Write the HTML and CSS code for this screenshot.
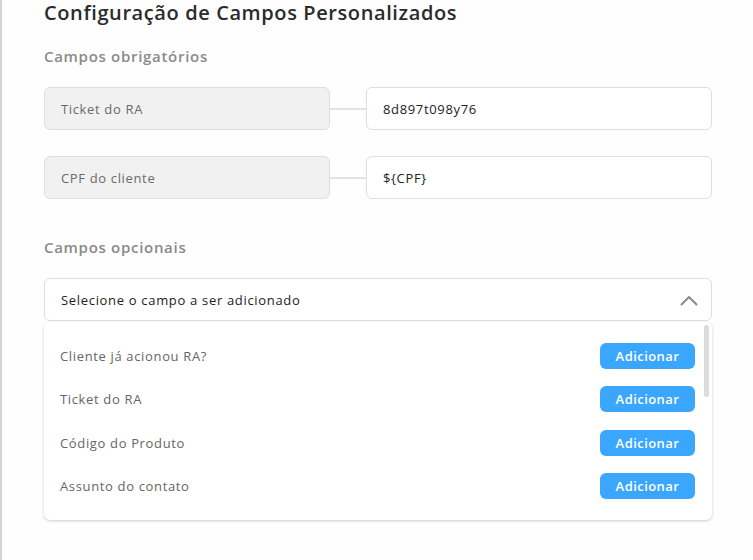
FILE: index.html
```html
<!DOCTYPE html>
<html lang="pt-BR">
<head>
<meta charset="utf-8">
<title>Configuração de Campos Personalizados</title>
<link rel="stylesheet" href="styles.css">
</head>
<body>
<div class="page">
  <main class="content">
    <h1 class="title">Configuração de Campos Personalizados</h1>

    <h2 class="section-title">Campos obrigatórios</h2>
    <div class="mapping-list">
      <div class="mapping-row">
        <div class="field field-locked">Ticket do RA</div>
        <div class="connector"></div>
        <div class="field field-value">8d897t098y76</div>
      </div>
      <div class="mapping-row">
        <div class="field field-locked">CPF do cliente</div>
        <div class="connector"></div>
        <div class="field field-value">${CPF}</div>
      </div>
    </div>

    <h2 class="section-title section-optional">Campos opcionais</h2>
    <div class="select">
      <span class="select-label">Selecione o campo a ser adicionado</span>
      <svg class="chevron" width="18" height="11" viewBox="0 0 18 11" aria-hidden="true">
        <path d="M1.5 9.5 L9 2 L16.5 9.5" fill="none" stroke="#8a8a8a" stroke-width="2" stroke-linecap="round" stroke-linejoin="round"/>
      </svg>
    </div>
    <div class="dropdown">
      <ul class="option-list">
        <li class="option"><span class="option-label">Cliente já acionou RA?</span><button class="btn-add">Adicionar</button></li>
        <li class="option"><span class="option-label">Ticket do RA</span><button class="btn-add">Adicionar</button></li>
        <li class="option"><span class="option-label">Código do Produto</span><button class="btn-add">Adicionar</button></li>
        <li class="option"><span class="option-label">Assunto do contato</span><button class="btn-add">Adicionar</button></li>
      </ul>
      <div class="scrollbar"><div class="scroll-thumb"></div></div>
    </div>
  </main>
</div>
</body>
</html>
```

FILE: styles.css
```css
* { box-sizing: border-box; }

html, body {
  margin: 0;
  padding: 0;
  background: #ffffff;
}

body {
  font-family: "Open Sans", "Noto Sans", sans-serif;
  color: #222;
}

.page {
  min-height: 560px;
  border-left: 2px solid #d4d4d4;
  background: #fefefe;
}

.content {
  width: 710px;
  padding-left: 42px;
}

.title {
  margin: 0;
  font-size: 20px;
  line-height: 26px;
  font-weight: 600;
  letter-spacing: 0.6px;
  color: #2b2b2b;
}

.section-title {
  margin: 20px 0 21px;
  font-size: 15px;
  line-height: 20px;
  font-weight: 600;
  letter-spacing: 0.7px;
  color: #8a8a8a;
}

.section-optional {
  margin-top: 38px;
}

.mapping-list {
  display: flex;
  flex-direction: column;
  gap: 26px;
}

.mapping-row {
  display: flex;
  align-items: center;
  width: 668px;
}

.field {
  height: 43px;
  display: flex;
  align-items: center;
  padding: 0 16px;
  border: 1px solid #dedede;
  border-radius: 6px;
  font-size: 13px;
  letter-spacing: 0.65px;
}

.field-locked {
  width: 286px;
  background: #f1f1f1;
  color: #6a6a6a;
}

.connector {
  width: 36px;
  height: 2px;
  background: #e2e2e2;
}

.field-value {
  flex: 1;
  background: #fff;
  color: #222;
}

.select {
  width: 668px;
  height: 43px;
  display: flex;
  align-items: center;
  justify-content: space-between;
  padding: 0 13px 0 16px;
  border: 1px solid #dedede;
  border-radius: 6px;
  background: #fff;
  font-size: 13px;
  letter-spacing: 0.68px;
  color: #222;
}

.chevron { display: block; margin-top: 1px; }

.dropdown {
  position: relative;
  width: 668px;
  margin-top: 1px;
  background: #fff;
  border-radius: 6px;
  box-shadow: 0 1px 3px rgba(0,0,0,0.2);
}

.option-list {
  list-style: none;
  margin: 0;
  padding: 12px 17px 12px 16px;
}

.option {
  height: 43.5px;
  display: flex;
  align-items: center;
  justify-content: space-between;
}

.option-label {
  font-size: 13px;
  letter-spacing: 0.65px;
  color: #666;
}

.btn-add {
  width: 95px;
  height: 26px;
  border: 0;
  border-radius: 6px;
  background: #3ba6fd;
  color: #fff;
  font-family: inherit;
  font-size: 13px;
  font-weight: 600;
  letter-spacing: 0.45px;
  padding: 0;
  cursor: pointer;
}

.scrollbar {
  position: absolute;
  top: 3px;
  right: 3px;
  width: 5px;
  height: 190px;
}

.scroll-thumb {
  width: 5px;
  height: 72px;
  border-radius: 3px;
  background: #dcdcdc;
}
```
